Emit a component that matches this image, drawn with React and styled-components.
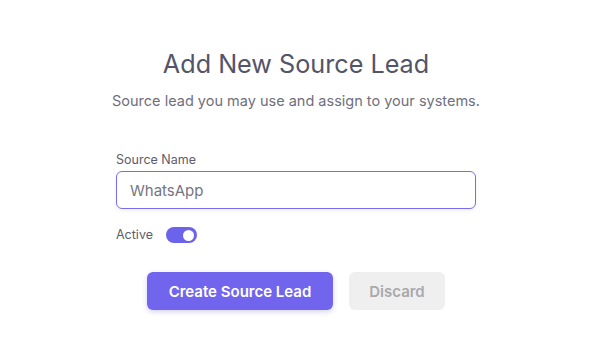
import React from "react";
import styled, { createGlobalStyle } from "styled-components";

const Global = createGlobalStyle`
  html, body { margin: 0; padding: 0; background: #ffffff; }
  body { font-family: Inter, "Noto Sans", sans-serif; }
  * { box-sizing: border-box; }
`;

const Page = styled.div`
  width: 592px;
  height: 352px;
  display: flex;
  flex-direction: column;
  align-items: center;
  padding-top: 47px;
`;

const Title = styled.h1`
  margin: 0;
  font-size: 25.2px;
  font-weight: 400;
  line-height: 34px;
  color: #545468;
`;

const Subtitle = styled.p`
  margin: 10px 0 0;
  font-size: 14.5px;
  line-height: 20px;
  color: #6f6f7d;
`;

const Form = styled.div`
  width: 360px;
  margin-top: 41px;
  display: flex;
  flex-direction: column;
`;

const Label = styled.label`
  font-size: 12.5px;
  line-height: 16px;
  color: #5d5d6c;
`;

const Input = styled.input`
  margin-top: 3px;
  height: 38px;
  width: 100%;
  border: 1px solid #7a6cf0;
  border-radius: 6px;
  padding: 0 13px;
  font-family: inherit;
  font-size: 15px;
  color: #75757f;
  outline: none;
  box-shadow: 0 2px 4px rgba(0, 0, 0, 0.06);
`;

const ToggleRow = styled.div`
  margin-top: 18px;
  display: flex;
  align-items: center;
  gap: 13px;
`;

const Track = styled.div`
  width: 31px;
  height: 16px;
  border-radius: 8px;
  background: ${(p) => (p.$on ? "#6c63ec" : "#cfcfd6")};
  display: flex;
  align-items: center;
  justify-content: ${(p) => (p.$on ? "flex-end" : "flex-start")};
  padding: 0 3px;
`;

const Knob = styled.div`
  width: 11px;
  height: 11px;
  border-radius: 50%;
  background: #ffffff;
`;

const Actions = styled.div`
  margin-top: 29px;
  display: flex;
  gap: 16px;
  justify-content: center;
`;

const Button = styled.button`
  height: 38px;
  border: none;
  border-radius: 6px;
  font-family: inherit;
  font-size: 15px;
  font-weight: 600;
  padding: 0;
  width: ${(p) => (p.$primary ? "186px" : "96px")};
  background: ${(p) => (p.$primary ? "#7164ed" : "#efefef")};
  color: ${(p) => (p.$primary ? "#ffffff" : "#a9a9ad")};
  box-shadow: ${(p) => (p.$primary ? "0 2px 5px rgba(90, 80, 200, 0.25)" : "none")};
`;

export default function App() {
  return (
    <>
      <Global />
      <Page>
        <Title>Add New Source Lead</Title>
        <Subtitle>Source lead you may use and assign to your systems.</Subtitle>
        <Form>
          <Label>Source Name</Label>
          <Input defaultValue="WhatsApp" />
          <ToggleRow>
            <Label>Active</Label>
            <Track $on>
              <Knob />
            </Track>
          </ToggleRow>
        </Form>
        <Actions>
          <Button $primary>Create Source Lead</Button>
          <Button>Discard</Button>
        </Actions>
      </Page>
    </>
  );
}
